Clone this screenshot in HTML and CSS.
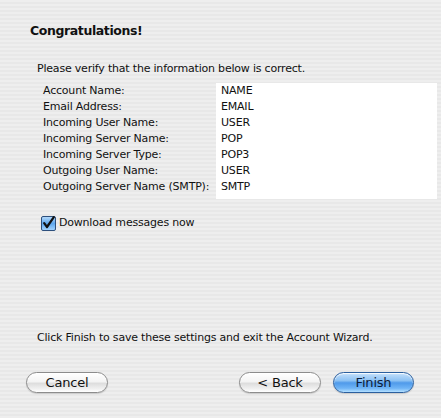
FILE: index.html
```html
<!DOCTYPE html>
<html lang="en">
<head>
  <meta charset="UTF-8" />
  <title>Account Wizard</title>
  <link rel="stylesheet" href="styles.css">
</head>
<body>

  <div class="wizard">
    <h1 class="title">Congratulations!</h1>

    <!-- Summary Section -->
    <div class="section">
      <p class="intro">Please verify that the information below is correct.</p>
      <div class="summary">
        <ul class="labels">
          <li>Account Name:</li>
          <li>Email Address:</li>
          <li>Incoming User Name:</li>
          <li>Incoming Server Name:</li>
          <li>Incoming Server Type:</li>
          <li>Outgoing User Name:</li>
          <li>Outgoing Server Name (SMTP):</li>
        </ul>
        <ul class="values">
          <li>NAME</li>
          <li>EMAIL</li>
          <li>USER</li>
          <li>POP</li>
          <li>POP3</li>
          <li>USER</li>
          <li>SMTP</li>
        </ul>
      </div>

      <label class="check">
        <svg width="15" height="15" viewBox="0 0 15 15">
          <defs>
            <linearGradient id="box" x1="0" y1="0" x2="0" y2="1">
              <stop offset="0" stop-color="#b9dcfb"/>
              <stop offset="0.5" stop-color="#5da6ec"/>
              <stop offset="1" stop-color="#a7d6ff"/>
            </linearGradient>
          </defs>
          <rect x="0.5" y="0.5" width="14" height="14" rx="1.5" fill="url(#box)" stroke="#2d4f7c"/>
          <path d="M3.2 7.2 L6 11 L12.8 1.2" fill="none" stroke="#111" stroke-width="2.2" stroke-linecap="round" stroke-linejoin="round"/>
        </svg>
        Download messages now
      </label>
    </div>

    <!-- Footer -->
    <div class="footer">
      <p class="note">Click Finish to save these settings and exit the Account Wizard.</p>
      <div class="buttons">
        <button class="btn">Cancel</button>
        <div class="right">
          <button class="btn">&lt; Back</button>
          <button class="btn default">Finish</button>
        </div>
      </div>
    </div>
  </div>

</body>
</html>
```

FILE: styles.css
```css
/* Base Styles */
body {
  margin: 0;
  font-family: "DejaVu Sans", sans-serif;
  font-size: 11px;
  letter-spacing: -0.2px;
  color: #111;
}
.wizard {
  width: 441px;
  height: 418px;
  box-sizing: border-box;
  padding: 23px 0 25px 0;
  display: flex;
  flex-direction: column;
  background: repeating-linear-gradient(#eeeeee 0, #eeeeee 2px, #e8e8e8 2px, #e8e8e8 4px);
}
.title {
  margin: 0 0 0 30px;
  font-size: 12.5px;
  letter-spacing: -0.4px;
  line-height: 16px;
  font-weight: bold;
}

/* Summary */
.section {
  padding-left: 37px;
  margin-top: 22px;
}
.intro {
  margin: 0;
  line-height: 16px;
}
.summary {
  display: flex;
  margin-top: 6px;
}
.summary ul {
  list-style: none;
  margin: 0;
  padding: 0;
}
.summary li {
  line-height: 16px;
  height: 16px;
  white-space: nowrap;
}
.labels {
  width: 173px;
  padding-left: 6px !important;
}
.values {
  flex: 1;
  background: #fff;
  padding: 0 0 4px 5px !important;
  margin-right: 4px !important;
}

.check {
  display: flex;
  align-items: center;
  gap: 3px;
  margin: 16px 0 0 4px;
  line-height: 16px;
}
.check svg {
  display: block;
}

/* Footer */
.footer {
  margin-top: auto;
}
.note {
  margin: 0 0 0 37px;
  line-height: 16px;
}
.buttons {
  display: flex;
  justify-content: space-between;
  padding: 0 27px 0 26px;
  margin-top: 26px;
}
.right {
  display: flex;
  gap: 12px;
}
.btn {
  width: 82px;
  height: 21px;
  padding: 0;
  font-family: "DejaVu Sans", sans-serif;
  font-size: 13px;
  letter-spacing: -0.2px;
  color: #111;
  border: 1px solid #8c8c8c;
  border-radius: 11px;
  background: linear-gradient(#ffffff 0, #f4f4f4 45%, #dedede 55%, #f2f2f2 85%, #ffffff 100%);
  box-shadow: inset 0 1px 1px rgba(255,255,255,0.9), 0 1px 1px rgba(0,0,0,0.15);
}
.btn.default {
  width: 81px;
  color: #0c1c3a;
  border-color: #2b5f9e;
  background: linear-gradient(#c4e0fb 0, #8cc1f3 40%, #4f9aea 52%, #6fb4f6 80%, #b4e0ff 100%);
}
```
